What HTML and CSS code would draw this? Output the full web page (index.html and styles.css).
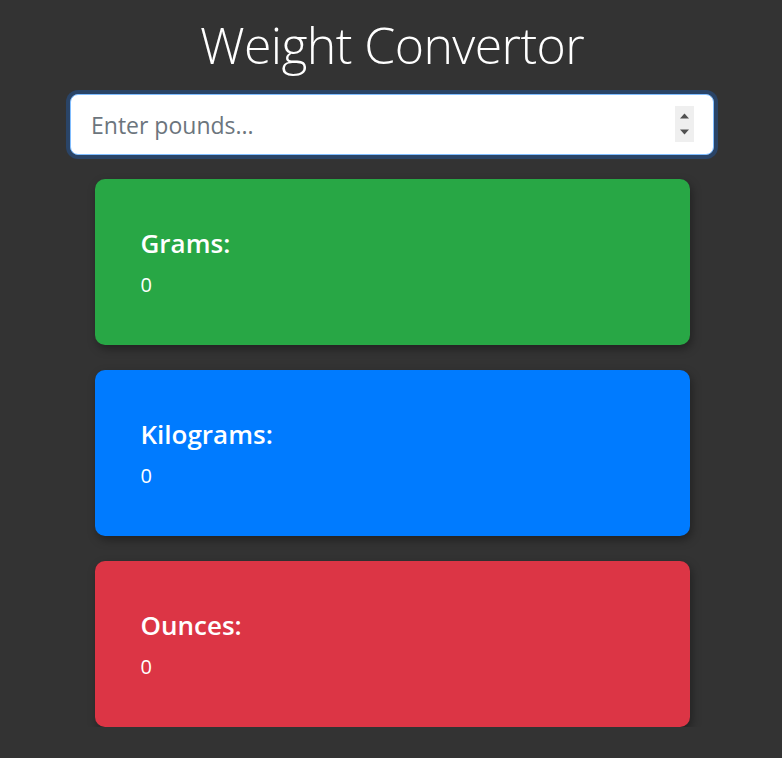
FILE: index.html
```html
<!DOCTYPE html>
<html lang="en">
<head>
<meta charset="utf-8">
<title>Weight Convertor</title>
<link rel="stylesheet" href="styles.css">
</head>
<body>
<main class="app">
  <h1 class="title">Weight Convertor</h1>
  <div class="field">
    <input class="pounds" type="text" placeholder="Enter pounds...">
    <span class="spin" aria-hidden="true">
      <svg width="19" height="36" viewBox="0 0 19 36"><rect width="19" height="36" fill="#efefef"/><path d="M5 12.5 L9.5 7.5 L14 12.5 Z" fill="#505050"/><path d="M5 23.5 L14 23.5 L9.5 28.5 Z" fill="#505050"/></svg>
    </span>
  </div>
  <section class="cards">
    <div class="card card-green">
      <h4 class="card-title">Grams:</h4>
      <div class="card-value">0</div>
    </div>
    <div class="card card-blue">
      <h4 class="card-title">Kilograms:</h4>
      <div class="card-value">0</div>
    </div>
    <div class="card card-red">
      <h4 class="card-title">Ounces:</h4>
      <div class="card-value">0</div>
    </div>
  </section>
</main>
</body>
</html>
```

FILE: styles.css
```css
* { box-sizing: border-box; }
html, body { margin: 0; padding: 0; }
body {
  background: #333333;
  font-family: "Open Sans", "Noto Sans", sans-serif;
  color: #fff;
  padding-left: 2px;
}
.app {
  width: 644px;
  margin: 0 auto;
  padding-top: 14px;
  display: flex;
  flex-direction: column;
  align-items: center;
}
.title {
  margin: 0;
  font-size: 50px;
  line-height: 62px;
  font-weight: 300;
  letter-spacing: -0.6px;
  color: #fff;
  text-align: center;
}
.field {
  position: relative;
  width: 644px;
  margin-top: 18px;
}
.pounds {
  display: block;
  width: 100%;
  height: 61px;
  padding: 0 20px;
  border: 1px solid #80bdff;
  border-radius: 8px;
  background: #fff;
  font-family: inherit;
  font-size: 23px;
  color: #495057;
  outline: none;
  box-shadow: 0 0 0 4px #2a4467;
}
.pounds::placeholder { color: #6c757d; }
.spin {
  position: absolute;
  right: 20px;
  top: 12px;
  width: 19px;
  height: 36px;
  display: block;
}
.spin svg { display: block; }
.cards {
  width: 595px;
  margin-top: 24px;
  display: flex;
  flex-direction: column;
  gap: 25px;
}
.card {
  height: 166px;
  border-radius: 10px;
  padding: 48px 46px 0;
  box-shadow: 2px 4px 10px rgba(0,0,0,.35);
}
.card-green { background: #28a745; }
.card-blue { background: #007bff; }
.card-red { background: #dc3545; }
.card-title {
  margin: 0;
  font-size: 26px;
  line-height: 32px;
  font-weight: 600;
}
.card-value {
  margin-top: 13px;
  font-size: 20px;
  line-height: 26px;
}
```
